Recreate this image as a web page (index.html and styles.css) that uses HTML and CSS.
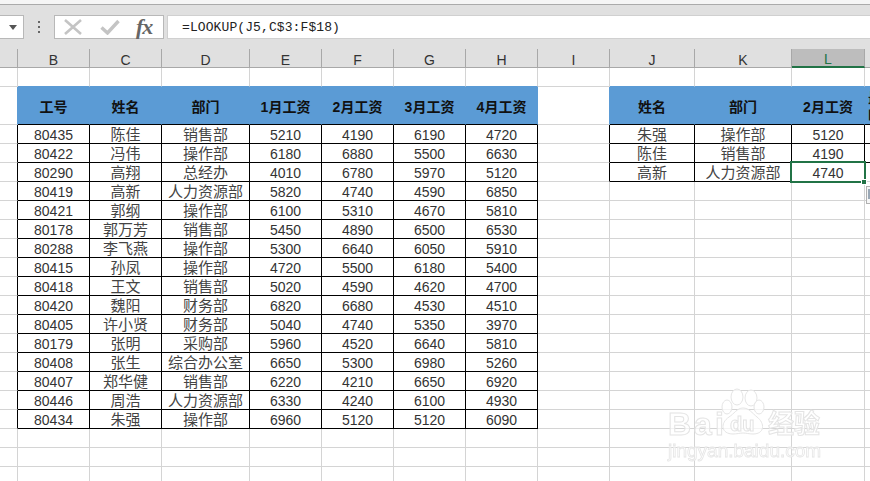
FILE: index.html
```html
<!DOCTYPE html>
<html lang="zh-CN">
<head>
<meta charset="utf-8">
<title>LOOKUP</title>
<link rel="stylesheet" href="styles.css">
</head>
<body>
<div class="app">
  <div class="strip"></div>
  <div class="formula-bar">
    <div class="namebox"><svg class="caret" width="8" height="5" viewBox="0 0 8 5"><path d="M0 0h8L4 5z"/></svg></div>
    <div class="grip"><i></i><i></i><i></i></div>
    <div class="fxbox">
      <svg width="18" height="16" viewBox="0 0 18 16" class="ico-x"><path d="M1 1L17 15M17 1L1 15" /></svg>
      <svg width="20" height="16" viewBox="0 0 20 16" class="ico-ok"><path d="M1.500 8.500L7.500 14L18.500 2" /></svg>
      <span class="fx">fx</span>
    </div>
    <div class="formula">=LOOKUP(J5,C$3:F$18)</div>
  </div>
  <div class="sheet">
    <table>
      <colgroup><col class="a"><col class="c72"><col class="c72"><col class="c88"><col class="c72"><col class="c72"><col class="c72"><col class="c72"><col class="c72"><col class="c85"><col class="c97"><col class="c73"><col class="c72"></colgroup>
      <thead>
        <tr class="heads"><th class="noline"></th><th>B</th><th>C</th><th>D</th><th>E</th><th>F</th><th>G</th><th>H</th><th>I</th><th>J</th><th>K</th><th class="sel">L</th><th>M</th></tr>
      </thead>
      <tbody>
        <tr class="above"><td></td><td class="up"></td><td class="up"></td><td class="up"></td><td class="up"></td><td class="up"></td><td class="up"></td><td class="up"></td><td></td><td class="up"></td><td class="up"></td><td class="up"></td><td class="up"></td></tr>
        <tr class="title"><td class="lb"></td><td class="h">工号</td><td class="h">姓名</td><td class="h">部门</td><td class="h">1月工资</td><td class="h">2月工资</td><td class="h">3月工资</td><td class="h">4月工资</td><td class="lb2"></td><td class="h">姓名</td><td class="h">部门</td><td class="h">2月工资</td><td class="h m">最后<br>的</td></tr>
        <tr><td class="e"></td><td class="d n">80435</td><td class="d">陈佳</td><td class="d">销售部</td><td class="d n">5210</td><td class="d n">4190</td><td class="d n">6190</td><td class="d n">4720</td><td class="e"></td><td class="d">朱强</td><td class="d">操作部</td><td class="d n">5120</td><td class="d"></td></tr>
        <tr><td class="e"></td><td class="d n">80422</td><td class="d">冯伟</td><td class="d">操作部</td><td class="d n">6180</td><td class="d n">6880</td><td class="d n">5500</td><td class="d n">6630</td><td class="e"></td><td class="d">陈佳</td><td class="d">销售部</td><td class="d n">4190</td><td class="d"></td></tr>
        <tr><td class="e"></td><td class="d n">80290</td><td class="d">高翔</td><td class="d">总经办</td><td class="d n">4010</td><td class="d n">6780</td><td class="d n">5970</td><td class="d n">5120</td><td class="e"></td><td class="d">高新</td><td class="d">人力资源部</td><td class="d n active">4740<span class="sel-box"></span><span class="sel-handle"></span><span class="smart"><i></i></span></td><td></td></tr>
        <tr><td class="e"></td><td class="d n">80419</td><td class="d">高新</td><td class="d">人力资源部</td><td class="d n">5820</td><td class="d n">4740</td><td class="d n">4590</td><td class="d n">6850</td><td></td><td></td><td></td><td></td><td></td></tr>
        <tr><td class="e"></td><td class="d n">80421</td><td class="d">郭纲</td><td class="d">操作部</td><td class="d n">6100</td><td class="d n">5310</td><td class="d n">4670</td><td class="d n">5810</td><td></td><td></td><td></td><td></td><td></td></tr>
        <tr><td class="e"></td><td class="d n">80178</td><td class="d">郭万芳</td><td class="d">销售部</td><td class="d n">5450</td><td class="d n">4890</td><td class="d n">6500</td><td class="d n">6530</td><td></td><td></td><td></td><td></td><td></td></tr>
        <tr><td class="e"></td><td class="d n">80288</td><td class="d">李飞燕</td><td class="d">操作部</td><td class="d n">5300</td><td class="d n">6640</td><td class="d n">6050</td><td class="d n">5910</td><td></td><td></td><td></td><td></td><td></td></tr>
        <tr><td class="e"></td><td class="d n">80415</td><td class="d">孙凤</td><td class="d">操作部</td><td class="d n">4720</td><td class="d n">5500</td><td class="d n">6180</td><td class="d n">5400</td><td></td><td></td><td></td><td></td><td></td></tr>
        <tr><td class="e"></td><td class="d n">80418</td><td class="d">王文</td><td class="d">销售部</td><td class="d n">5020</td><td class="d n">4590</td><td class="d n">4620</td><td class="d n">4700</td><td></td><td></td><td></td><td></td><td></td></tr>
        <tr><td class="e"></td><td class="d n">80420</td><td class="d">魏阳</td><td class="d">财务部</td><td class="d n">6820</td><td class="d n">6680</td><td class="d n">4530</td><td class="d n">4510</td><td></td><td></td><td></td><td></td><td></td></tr>
        <tr><td class="e"></td><td class="d n">80405</td><td class="d">许小贤</td><td class="d">财务部</td><td class="d n">5040</td><td class="d n">4740</td><td class="d n">5350</td><td class="d n">3970</td><td></td><td></td><td></td><td></td><td></td></tr>
        <tr><td class="e"></td><td class="d n">80179</td><td class="d">张明</td><td class="d">采购部</td><td class="d n">5960</td><td class="d n">4520</td><td class="d n">6640</td><td class="d n">5810</td><td></td><td></td><td></td><td></td><td></td></tr>
        <tr><td class="e"></td><td class="d n">80408</td><td class="d">张生</td><td class="d">综合办公室</td><td class="d n">6650</td><td class="d n">5300</td><td class="d n">6980</td><td class="d n">5260</td><td></td><td></td><td></td><td></td><td></td></tr>
        <tr><td class="e"></td><td class="d n">80407</td><td class="d">郑华健</td><td class="d">销售部</td><td class="d n">6220</td><td class="d n">4210</td><td class="d n">6650</td><td class="d n">6920</td><td></td><td></td><td></td><td></td><td></td></tr>
        <tr><td class="e"></td><td class="d n">80446</td><td class="d">周浩</td><td class="d">人力资源部</td><td class="d n">6330</td><td class="d n">4240</td><td class="d n">6100</td><td class="d n">4930</td><td></td><td></td><td></td><td></td><td></td></tr>
        <tr><td class="e"></td><td class="d n">80434</td><td class="d">朱强</td><td class="d">操作部</td><td class="d n">6960</td><td class="d n">5120</td><td class="d n">5120</td><td class="d n">6090</td><td></td><td></td><td></td><td></td><td></td></tr>
        <tr><td></td><td></td><td></td><td></td><td></td><td></td><td></td><td></td><td></td><td></td><td></td><td></td><td></td></tr>
        <tr><td></td><td></td><td></td><td></td><td></td><td></td><td></td><td></td><td></td><td></td><td></td><td></td><td></td></tr>
        <tr><td></td><td></td><td></td><td></td><td></td><td></td><td></td><td></td><td></td><td></td><td></td><td></td><td></td></tr>
      </tbody>
    </table>
    <div class="watermark">
      <svg class="paw" width="46" height="47" viewBox="0 0 46 47"><ellipse cx="17" cy="9" rx="6" ry="8"/><ellipse cx="31" cy="10" rx="6" ry="8"/><ellipse cx="7" cy="19" rx="5" ry="7"/><ellipse cx="39" cy="19" rx="5" ry="7"/><path d="M23 20c6 0 9 5 14 9 8 6 8 17-4 17-4 0-7-1-10-1s-6 1-10 1C1 46 0 35 9 29c5-3 8-9 14-9z"/></svg>
      <span class="wm-bai">Bai</span><span class="wm-du">du</span><span class="wm-cn">经验</span>
      <div class="wm-url">jingyan.baidu.com</div>
    </div>
  </div>
</div>
</body>
</html>
```
FILE: styles.css
```css
* { box-sizing: border-box; }
html, body { margin: 0; padding: 0; }
body { width: 870px; height: 481px; overflow: hidden; background: #fff; font-family: "Liberation Sans", "Noto Sans CJK SC", sans-serif; }
.app { width: 870px; height: 481px; display: flex; flex-direction: column; overflow: hidden; }
.strip { height: 5px; flex: none; background: #f5f5f5; border-bottom: 1px solid #aaa; }
.formula-bar { height: 44px; flex: none; background: #e0e0e0; display: flex; align-items: flex-start; padding-top: 10px; }
.namebox { width: 24px; height: 24px; background: #fff; border: 1px solid #b8b8b8; border-left: 0; display: flex; align-items: center; justify-content: flex-end; padding-right: 6px; }
.caret { fill: #555; }
.grip { width: 30px; height: 24px; display: flex; flex-direction: column; align-items: center; justify-content: center; gap: 3px; }
.grip i { width: 2px; height: 2px; background: #666; display: block; margin-left: -1px; }
.fxbox { width: 110px; height: 24px; background: #fff; border: 1px solid #b8b8b8; display: flex; align-items: center; padding-left: 9px; position: relative; }
.ico-x path { fill: none; stroke: #c4c4c4; stroke-width: 2.600; }
.ico-ok { margin-left: 18px; }
.ico-ok path { fill: none; stroke: #c4c4c4; stroke-width: 3.400; }
.fx { font-family: "Liberation Serif", serif; font-style: italic; font-weight: bold; font-size: 22px; letter-spacing: -1px; color: #666; margin-left: 16px; line-height: 22px; }
.formula { margin-left: 3px; flex: 1; height: 24px; background: #fff; border: 1px solid #d0d0d0; border-right: 0; font-family: "Liberation Mono", "Noto Sans CJK SC", monospace; font-size: 13px; letter-spacing: .1px; line-height: 23px; padding-left: 14px; color: #222; }
.sheet { position: relative; flex: 1; overflow: hidden; }
table { border-collapse: separate; border-spacing: 0; table-layout: fixed; width: 937px; }
col.a { width: 18px; } col.c72 { width: 72px; } col.c88 { width: 88px; } col.c85 { width: 85px; } col.c97 { width: 97px; } col.c73 { width: 73px; }
th, td { padding: 0; border-right: 1px solid #d4d4d4; border-bottom: 1px solid #d4d4d4; text-align: center; white-space: nowrap; height: 19px; overflow: visible; }
.heads th { height: 19px; padding-top: 3px; background: #e0e0e0; border-right-color: #a8a8a8; border-bottom-color: #a8a8a8; font-weight: normal; font-size: 14px; line-height: 14px; color: #333; }
.heads th.sel { background: #bdbdbd; color: #217346; border-bottom: 2px solid #217346; padding-top: 2px; }
.above .up { border-bottom-color: #5b9bd5; }
.title td { height: 38px; }
.title .lb, .title .lb2 { border-right-color: #5b9bd5; }
.title .h { background: #5b9bd5; border-right-color: #5b9bd5; border-bottom-color: #000; font-weight: bold; font-size: 14px; color: #111; }
.title .m { text-align: left; padding-left: 3px; line-height: 16px; font-size: 14px; }
.e { border-right-color: #000; }
.d { border-right-color: #000; border-bottom-color: #000; font-size: 15px; line-height: 16px; padding-top: 2px; color: #444; }
.n { font-size: 14px; color: #333; }
.active { position: relative; }
.sel-box { position: absolute; left: -2px; top: -2px; right: -2px; bottom: -2px; border: 2px solid #217346; }
.sel-handle { position: absolute; right: -3px; bottom: -4px; background: #217346; border: 1px solid #fff; box-sizing: content-box; width: 4px; height: 4px; }
.smart { position: absolute; left: 74px; top: 23px; width: 20px; height: 18px; background: #f6f6f6; border: 1px solid #b0b0b0; }
.smart i { display: block; margin: 2px 0 0 1px; width: 10px; height: 10px; background: #9aa8b6; }
.watermark { position: absolute; left: 668px; top: 339px; width: 160px; height: 74px; pointer-events: none; filter: blur(.4px); }
.paw { position: absolute; left: 52px; top: 0; fill: rgba(255,255,255,.75); stroke: #e4e4e4; stroke-width: 1; }
.wm-bai, .wm-du, .wm-cn { position: absolute; color: rgba(255,255,255,.7); -webkit-text-stroke: 1px #e4e4e4; font-weight: bold; }
.wm-bai { left: 0; top: 18px; font-size: 32px; line-height: 36px; letter-spacing: 3px; }
.wm-du { left: 62px; top: 24px; font-size: 20px; line-height: 24px; }
.wm-cn { left: 100px; top: 21px; font-size: 26px; line-height: 30px; }
.wm-url { position: absolute; left: 0; top: 52px; font-size: 19px; line-height: 22px; -webkit-text-stroke: .8px #e6e6e6; color: rgba(255,255,255,.7); }
```
